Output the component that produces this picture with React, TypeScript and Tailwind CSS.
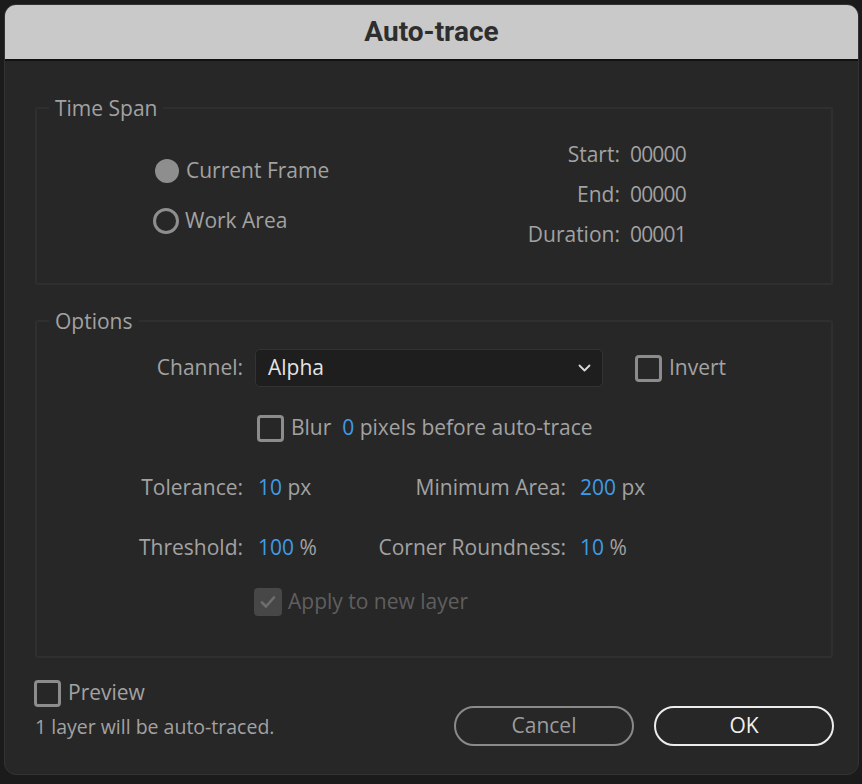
import React from "react";

const font = { fontFamily: '"Open Sans", "Noto Sans", sans-serif' };

function Checkbox({ checked = false, disabled = false }: { checked?: boolean; disabled?: boolean }) {
  if (disabled) {
    return (
      <div className="w-[28px] h-[28px] rounded-[4px] bg-[#474747] flex items-center justify-center shrink-0">
        {checked && (
          <svg width="18" height="18" viewBox="0 0 18 18" fill="none">
            <path d="M3 9.5 L7 13.5 L15 4.5" stroke="#6e6e6e" strokeWidth="2.6" strokeLinecap="round" strokeLinejoin="round" />
          </svg>
        )}
      </div>
    );
  }
  return <div className="w-[27px] h-[27px] rounded-[4px] border-[3px] border-[#8c8c8c] shrink-0" />;
}

function Blue({ children }: { children: React.ReactNode }) {
  return <span className="text-[#3f9be6]">{children}</span>;
}

export default function App() {
  return (
    <div className="w-[862px] h-[784px] bg-[#1b1b1b] pt-[4px] pl-[4px] text-[21px] text-[#a2a2a2]" style={font}>
      <div className="w-[855px] h-[771px] rounded-[12px] bg-[#272727] border border-[#333333] overflow-hidden flex flex-col">
        <div className="h-[56px] shrink-0 bg-[#c9c9c9] border-b-[2px] border-[#111111] flex items-center justify-center">
          <span className="text-[28px] font-bold text-[#2e2e2e]" style={{ fontFamily: '"Liberation Sans Narrow", Roboto, sans-serif' }}>
            Auto-trace
          </span>
        </div>

        <div className="flex flex-col pl-[30px] pr-[25px]">
          {/* Time Span */}
          <fieldset className="mt-[33px] h-[191px] border-2 border-[#2f2f2f] rounded-[3px]">
            <legend className="ml-[12px] px-[6px] leading-[28px]">Time Span</legend>
            <div className="flex">
              <div className="ml-[118px] mt-[24px] flex flex-col">
                <div className="flex items-center h-[50px] gap-[7px]">
                  <div className="w-[24px] h-[24px] rounded-full bg-[#8e8e8e]" />
                  <span>Current Frame</span>
                </div>
                <div className="flex items-center h-[50px] gap-[6px]">
                  <div className="w-[26px] h-[26px] rounded-full border-[3px] border-[#8e8e8e] -ml-[2px]" />
                  <span>Work Area</span>
                </div>
              </div>
              <div className="ml-auto mr-[145px] mt-[13px] grid grid-cols-[auto_auto] gap-x-[10px] auto-rows-[40px] items-center">
                <span className="text-right">Start:</span>
                <span className="tracking-[-0.8px]">00000</span>
                <span className="text-right">End:</span>
                <span className="tracking-[-0.8px]">00000</span>
                <span className="text-right">Duration:</span>
                <span className="tracking-[-0.8px]">00001</span>
              </div>
            </div>
          </fieldset>

          {/* Options */}
          <fieldset className="mt-[22px] h-[351px] border-2 border-[#2f2f2f] rounded-[3px]">
            <legend className="ml-[12px] px-[6px] leading-[28px]">Options</legend>
            <div className="flex flex-col mt-[3px]">
              <div className="flex items-center h-[60px]">
                <div className="w-[206px] text-right">Channel:</div>
                <div className="ml-[12px] w-[348px] h-[38px] rounded-[5px] bg-[#1e1e1e] border border-[#333333] flex items-center pl-[12px] pr-[11px] text-[#e4e4e4]">
                  <span className="flex-1">Alpha</span>
                  <svg width="13" height="8" viewBox="0 0 13 8" fill="none">
                    <path d="M1.5 1.5 L6.5 6.5 L11.5 1.5" stroke="#d8d8d8" strokeWidth="1.8" strokeLinecap="round" strokeLinejoin="round" />
                  </svg>
                </div>
                <div className="ml-[32px] flex items-center gap-[7px]">
                  <Checkbox />
                  <span>Invert</span>
                </div>
              </div>
              <div className="flex items-center h-[60px]">
                <div className="w-[206px]" />
                <div className="ml-[14px] flex items-center gap-[7px]">
                  <Checkbox />
                  <span>
                    Blur&nbsp; <Blue>0</Blue> pixels before auto-trace
                  </span>
                </div>
              </div>
              <div className="flex items-center h-[60px]">
                <div className="w-[206px] text-right">Tolerance:</div>
                <div className="ml-[15px] w-[100px]">
                  <Blue>10</Blue> px
                </div>
                <div className="w-[208px] text-right">Minimum Area:</div>
                <div className="ml-[14px]">
                  <Blue>200</Blue> px
                </div>
              </div>
              <div className="flex items-center h-[60px]">
                <div className="w-[206px] text-right">Threshold:</div>
                <div className="ml-[15px] w-[100px]">
                  <Blue>100</Blue> %
                </div>
                <div className="w-[208px] text-right">Corner Roundness:</div>
                <div className="ml-[14px]">
                  <Blue>10</Blue> %
                </div>
              </div>
              <div className="flex items-center h-[48px]">
                <div className="w-[206px]" />
                <div className="ml-[11px] flex items-center gap-[6px] text-[#5f5f5f]">
                  <Checkbox checked disabled />
                  <span>Apply to new layer</span>
                </div>
              </div>
            </div>
          </fieldset>

          {/* Bottom */}
          <div className="flex mt-[20px]">
            <div className="flex flex-col">
              <div className="flex items-center gap-[7px] h-[30px] -ml-[1px]">
                <Checkbox />
                <span>Preview</span>
              </div>
              <div className="mt-[4px] text-[19.5px] leading-[30px]">1 layer will be auto-traced.</div>
            </div>
            <div className="ml-auto mt-[28px] flex gap-[20px] -mr-[1px]">
              <button className="w-[180px] h-[40px] rounded-full border-2 border-[#8a8a8a] text-[#9c9c9c] flex items-center justify-center">
                Cancel
              </button>
              <button className="w-[180px] h-[40px] rounded-full border-2 border-[#ececec] text-[#f0f0f0] flex items-center justify-center">
                OK
              </button>
            </div>
          </div>
        </div>
      </div>
    </div>
  );
}
